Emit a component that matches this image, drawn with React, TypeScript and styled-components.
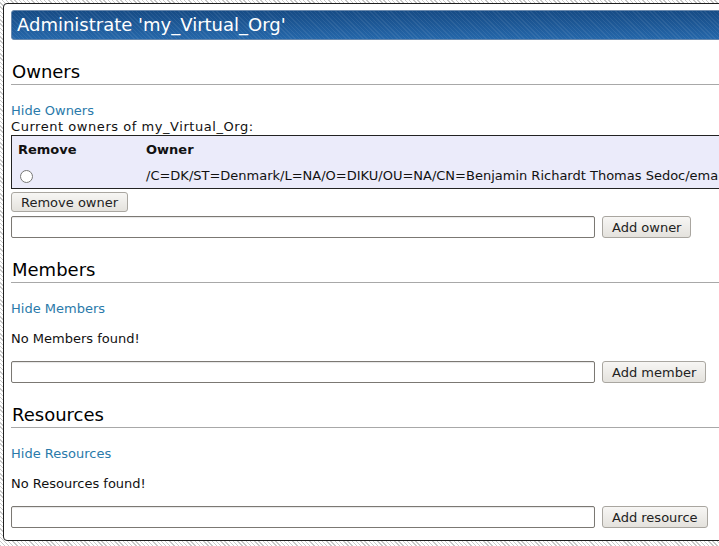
import styled, { createGlobalStyle } from "styled-components";

const GlobalStyle = createGlobalStyle`
  html, body {
    margin: 0;
    padding: 0;
    overflow: hidden;
  }
  body {
    padding: 3px 0 0 3px;
    font-family: "DejaVu Sans", Verdana, sans-serif;
    font-size: 13px;
    color: #111;
    background-color: #fff;
    background-image: repeating-linear-gradient(
      45deg,
      #fff 0px,
      #fff 2px,
      #c8c8c8 2px,
      #c8c8c8 3px
    );
    min-height: 546px;
  }
`;

const Page = styled.div`
  width: 1000px;
  background: #fff;
  border: 1px solid #1e1e1e;
  border-radius: 4px;
  padding: 6px 0 12px 7px;
`;

const TitleBar = styled.h1`
  margin: 0;
  height: 28px;
  line-height: 28px;
  padding-left: 5px;
  font-size: 18px;
  font-weight: normal;
  color: #fff;
  border: 1px solid #6a89ad;
  border-radius: 3px 0 0 3px;
  background-color: #1d5a99;
  background-image: repeating-linear-gradient(
      45deg,
      rgba(255, 255, 255, 0) 0px,
      rgba(255, 255, 255, 0) 2px,
      rgba(255, 255, 255, 0.07) 2px,
      rgba(255, 255, 255, 0.07) 3px
    ),
    linear-gradient(#164b85, #2567aa);
`;

const Section = styled.section`
  margin-top: 21px;
`;

const Heading = styled.h2`
  margin: 0 0 17px;
  padding: 0 0 2px 1px;
  font-size: 18px;
  font-weight: normal;
  line-height: 21px;
  color: #000;
  border-bottom: 1px solid #a8a8a8;
`;

const ToggleLink = styled.a`
  display: block;
  line-height: 17px;
  color: #2a7aaa;
  text-decoration: none;
  cursor: pointer;
`;

const Caption = styled.div`
  line-height: 16px;
  letter-spacing: 0.55px;
`;

const Notice = styled.p`
  margin: 13px 0 14px;
  line-height: 17px;
`;

const Table = styled.table`
  width: 100%;
  border-collapse: collapse;
  background: #ebebfa;
  border: 1px solid #222;
  border-right: none;
`;

const HeadCell = styled.th<{ $w?: number }>`
  text-align: left;
  font-weight: bold;
  height: 26px;
  padding: 0 6px;
  white-space: nowrap;
  width: ${(p) => (p.$w ? `${p.$w}px` : "auto")};
`;

const Cell = styled.td`
  height: 26px;
  padding: 0 6px;
  white-space: nowrap;
`;

const Radio = styled.input`
  margin: 0 0 0 2px;
  width: 13px;
  height: 13px;
  vertical-align: middle;
`;

const Button = styled.button<{ $h?: number }>`
  height: ${(p) => p.$h ?? 22}px;
  padding: 0 9px;
  font-family: "DejaVu Sans", Verdana, sans-serif;
  font-size: 13px;
  color: #222;
  border: 1px solid #a9a6a0;
  border-radius: 3px;
  background: linear-gradient(#f7f6f4, #e4e2dd);
  cursor: pointer;
`;

const RemoveButton = styled(Button)`
  display: block;
  margin-top: 3px;
`;

const AddRow = styled.div<{ $top: number }>`
  display: flex;
  gap: 7px;
  margin-top: ${(p) => p.$top}px;
`;

const TextInput = styled.input`
  box-sizing: border-box;
  width: 584px;
  height: 22px;
  margin: 0;
  border: 1px solid #7b7873;
  border-radius: 2px;
  box-shadow: inset 0 1px 1px rgba(0, 0, 0, 0.1);
  font-family: "DejaVu Sans", Verdana, sans-serif;
  font-size: 13px;
`;

const owner =
  "/C=DK/ST=Denmark/L=NA/O=DIKU/OU=NA/CN=Benjamin Richardt Thomas Sedoc/emailAddress=benjamin@diku.dk";

const App = () => {
  return (
    <>
      <GlobalStyle />
      <Page>
        <TitleBar>Administrate 'my_Virtual_Org'</TitleBar>

        <Section>
          <Heading>Owners</Heading>
          <ToggleLink>Hide Owners</ToggleLink>
          <Caption>Current owners of my_Virtual_Org:</Caption>
          <Table>
            <thead>
              <tr>
                <HeadCell $w={116}>Remove</HeadCell>
                <HeadCell>Owner</HeadCell>
              </tr>
            </thead>
            <tbody>
              <tr>
                <Cell>
                  <Radio type="radio" name="owner" />
                </Cell>
                <Cell>{owner}</Cell>
              </tr>
            </tbody>
          </Table>
          <RemoveButton $h={20}>Remove owner</RemoveButton>
          <AddRow $top={4}>
            <TextInput type="text" />
            <Button>Add owner</Button>
          </AddRow>
        </Section>

        <Section>
          <Heading>Members</Heading>
          <ToggleLink>Hide Members</ToggleLink>
          <Notice>No Members found!</Notice>
          <AddRow $top={0}>
            <TextInput type="text" />
            <Button>Add member</Button>
          </AddRow>
        </Section>

        <Section>
          <Heading>Resources</Heading>
          <ToggleLink>Hide Resources</ToggleLink>
          <Notice>No Resources found!</Notice>
          <AddRow $top={0}>
            <TextInput type="text" />
            <Button>Add resource</Button>
          </AddRow>
        </Section>
      </Page>
    </>
  );
};

export default App;
